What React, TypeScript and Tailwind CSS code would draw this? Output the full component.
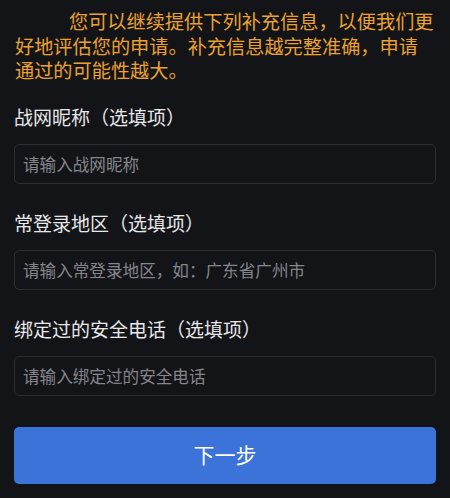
import React from "react";

const font = { fontFamily: '"Noto Sans CJK SC", "Noto Sans", sans-serif' };

function Field({ label, placeholder }: { label: string; placeholder: string }) {
  return (
    <div className="flex flex-col">
      <div className="text-[19px] leading-[24px] text-[#e8e8ea]">{label}</div>
      <input
        className="mt-[15px] h-[40px] w-full rounded-[5px] border border-[#2c2d32] bg-transparent px-[8px] text-[16.6px] text-[#e6e6e8] outline-none placeholder:text-[#85868b]"
        placeholder={placeholder}
        style={font}
      />
    </div>
  );
}

export default function App() {
  return (
    <div className="h-[498px] w-[450px] overflow-hidden bg-[#131418]" style={font}>
      <div className="px-[15px] pt-[9px]">
        <p className="w-[420px] indent-[54px] text-[19.2px] leading-[24.5px] text-[#eba230]">
          您可以继续提供下列补充信息，以便我们更好地评估您的申请。补充信息越完整准确，申请通过的可能性越大。
        </p>
      </div>
      <div className="mt-[22px] flex flex-col gap-[27px] px-[14px]">
        <Field label="战网昵称（选填项）" placeholder="请输入战网昵称" />
        <Field label="常登录地区（选填项）" placeholder="请输入常登录地区，如：广东省广州市" />
        <Field label="绑定过的安全电话（选填项）" placeholder="请输入绑定过的安全电话" />
      </div>
      <div className="mt-[31px] px-[14px]">
        <button className="flex h-[57px] w-full items-center justify-center rounded-[5px] bg-[#3b73d9] text-[21px] text-white">
          下一步
        </button>
      </div>
    </div>
  );
}
